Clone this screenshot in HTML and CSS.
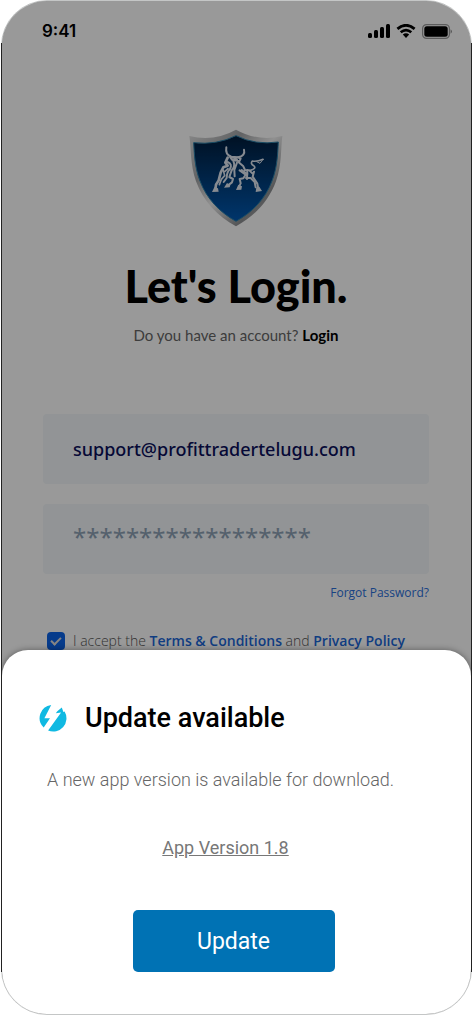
FILE: index.html
```html
<!DOCTYPE html>
<html lang="en">
<head>
    <meta charset="UTF-8" />
    <meta name="viewport" content="width=device-width, initial-scale=1.0">
    <title>Let's Login</title>
    <link rel="stylesheet" href="styles.css">
</head>
<body>
    <div class="phone">
        <header class="status-bar">
            <span class="time">9:41</span>
            <div class="status-icons">
                <svg width="22" height="14" viewBox="0 0 22 14">
                    <rect x="0" y="9" width="4" height="5" rx="1.5"/>
                    <rect x="6" y="6" width="4" height="8" rx="1.5"/>
                    <rect x="12" y="3" width="4" height="11" rx="1.5"/>
                    <rect x="18" y="0" width="4" height="14" rx="1.5"/>
                </svg>
                <svg width="20" height="14" viewBox="0 0 20 14">
                    <path d="M1.4 4.9Q10-2.4 18.6 4.9M4.7 8.3Q10 3.9 15.3 8.3" fill="none" stroke="#000" stroke-width="2.7"/>
                    <path d="M6.8 10.4Q10 8 13.2 10.4L10 13.9Z"/>
                </svg>
                <svg width="30" height="15" viewBox="0 0 30 15">
                    <rect x="0.6" y="0.6" width="26.8" height="13.8" rx="4" fill="none" stroke="#000" stroke-opacity=".4" stroke-width="1.2"/>
                    <rect x="2.3" y="2.3" width="23.4" height="10.4" rx="2.5"/>
                    <path d="M28.6 5.2q1.2.7 1.2 2.3t-1.2 2.3z" fill-opacity=".5"/>
                </svg>
            </div>
        </header>

        <main class="login">
            <svg class="logo" viewBox="41 27 282 294">
                <defs>
                    <linearGradient id="rim" x1="0" y1="0" x2="1" y2="1">
                        <stop offset="0" stop-color="#e4e4e4"/>
                        <stop offset=".3" stop-color="#a3a5a8"/>
                        <stop offset=".5" stop-color="#f0f0f0"/>
                        <stop offset=".75" stop-color="#8d8f92"/>
                        <stop offset="1" stop-color="#d8d8d8"/>
                    </linearGradient>
                    <linearGradient id="field" x1="0" y1="0" x2="0" y2="1">
                        <stop offset="0" stop-color="#001d3c"/>
                        <stop offset=".5" stop-color="#003c78"/>
                        <stop offset="1" stop-color="#005ab4"/>
                    </linearGradient>
                </defs>
                <!-- shield -->
                <path d="M42 48Q116 66 182 29Q248 66 321 48C316 86 320 132 302 184C280 244 238 288 182 319C126 288 84 244 62 184C44 132 48 86 42 48Z" fill="url(#rim)"/>
                <path d="M55 68Q124 76 182 47Q240 76 309 66C307 102 306 142 290 183C270 236 232 276 182 304C132 276 94 236 74 183C58 142 57 102 55 68Z" fill="url(#field)" stroke="#2b7fa8" stroke-width="3"/>
                <!-- bull -->
                <g fill="none" stroke="#e1e8f2" stroke-linecap="round" stroke-linejoin="round">
                    <path d="M153 82Q149 104 168 110L188 112Q211 107 206 89" stroke-width="6"/>
                    <path d="M163 109L170 119L192 124L196 116L188 112M170 111L185 118" stroke-width="6"/>
                    <path d="M157 113L150 128L157 137L144 142L136 158L130 181L122 194L120 209" stroke-width="8"/>
                    <path d="M157 126Q172 132 164 147Q154 156 154 174L145 186M174 123Q181 138 169 151L162 171L173 177L170 187L157 197M185 128L177 150L178 169" stroke-width="6"/>
                    <path d="M144 151L148 167L138 178L132 194M158 146L149 154" stroke-width="5"/>
                    <path d="M190 127L204 139L209 150L222 151L231 160M199 150L216 162M236 155L232 170L240 182L246 191L249 207" stroke-width="6"/>
                    <path d="M193 151L211 164L204 175L193 177L196 190L190 202M212 174L226 174L238 186L241 202M216 150L215 177" stroke-width="6"/>
                    <path d="M263 118Q244 126 231 123Q224 131 235 137Q245 145 225 151" stroke-width="5"/>
                    <path d="M244 125L254 130L263 118" stroke-width="3"/>
                </g>
                <path d="M117 202L128 205L130 215L110 216ZM155 189L165 196L163 202L146 203ZM189 194L200 199L198 209L182 210ZM243 202L252 200L260 213L241 216Z" fill="#e1e8f2"/>
            </svg>

            <h1>Let's Login.</h1>
            <p class="subtitle">Do you have an account? <a href="#">Login</a></p>

            <form class="login-form">
                <input type="email" class="field" aria-label="Email" value="support@profittradertelugu.com">
                <input type="password" class="field" aria-label="Password" placeholder="******************">
                <a href="#" class="forgot">Forgot Password?</a>
                <div class="accept">
                    <input type="checkbox" id="accept" checked>
                    <label for="accept">I accept the <a href="#">Terms &amp; Conditions</a> and <a href="#">Privacy Policy</a></label>
                </div>
            </form>
        </main>

        <!-- update prompt over the login screen -->
        <div class="backdrop">
            <section class="sheet" role="dialog" aria-labelledby="sheetTitle">
                <div class="sheet-header">
                    <svg width="28" height="28" viewBox="0 0 28 28">
                        <path d="M12.2.9A13.2 13.2 0 0 0 4.7 23.5L11 14.2H5.4Z" fill="#10b9e2"/>
                        <path d="M18.3 7.2L22.8 3.4L24.4 8.1L25.6 7.6A13.2 13.2 0 0 1 9.1 26.5L22.1 8.6L16.8 9.2Z" fill="#10b9e2"/>
                    </svg>
                    <h2 id="sheetTitle">Update available</h2>
                </div>
                <div class="sheet-body">
                    <p>A new app version is available for download.</p>
                    <a href="#" class="version">App Version 1.8</a>
                </div>
                <button type="button" class="update-button">Update</button>
            </section>
        </div>
    </div>
</body>
</html>
```
FILE: styles.css
```css
* {
    box-sizing: border-box;
}

body {
    margin: 0;
    padding: 0 1px;
    background: #fff;
    font-family: "Open Sans", sans-serif;
}

h1, h2, p {
    margin: 0;
    font-weight: normal;
}

a {
    text-decoration: none;
}

/* Phone frame */
.phone {
    position: relative;
    min-height: 100vh;
    border: 1px solid #c4c6c6;
    border-radius: 46px;
    background: #fff;
}

/* dark straight edges */
.phone::after {
    content: "";
    position: absolute;
    inset: 42px -1px;
    border: solid #222;
    border-width: 0 1px;
    pointer-events: none;
}

/* Status bar */
.status-bar {
    display: flex;
    justify-content: space-between;
    align-items: center;
    padding: 20px 19px 0 40px;
    height: 40px;
}

.time {
    font-family: Inter, sans-serif;
    font-size: 17px;
    line-height: 20px;
    font-weight: 600;
}

.status-icons {
    display: flex;
    align-items: center;
    gap: 6px;
    height: 16px;
}

/* Login screen */
.login {
    display: flex;
    flex-direction: column;
    align-items: center;
    padding: 88px 42px 0 41px;
}

.logo {
    width: 94px;
    height: 98px;
}

h1 {
    margin-top: 33px;
    font-family: Lato, sans-serif;
    font-size: 45px;
    line-height: 52px;
    font-weight: 900;
}

.subtitle {
    margin-top: 13px;
    font-family: Lato, sans-serif;
    font-size: 15px;
    line-height: 20px;
    color: #666;
}

.subtitle a {
    color: #000;
    font-weight: 700;
}

.login-form {
    display: flex;
    flex-direction: column;
    gap: 20px;
    width: 100%;
    margin-top: 69px;
}

.field {
    width: 100%;
    height: 70px;
    padding: 0 30px;
    border: none;
    border-radius: 4px;
    background: #f4f7fa;
    font-family: "Noto Sans", sans-serif;
    font-size: 18px;
    font-weight: 500;
    color: #0a0f5a;
}

.field::placeholder {
    font-size: 24px;
    font-weight: 400;
    color: #8da1b5;
    opacity: 1;
}

.forgot {
    align-self: flex-end;
    margin-top: -10px;
    font-size: 12px;
    line-height: 18px;
    color: #2a6fdb;
}

.accept {
    display: flex;
    align-items: center;
    gap: 8px;
    margin-top: 8px;
    padding-left: 4px;
    font-size: 14px;
    line-height: 22px;
    color: #555;
    white-space: nowrap;
}

.accept label {
    font-weight: 300;
}

.accept a {
    color: #1a66d8;
    font-weight: 600;
}

.accept input {
    appearance: none;
    width: 18px;
    height: 18px;
    margin: 0;
    border-radius: 4px;
    background: #0b63e8;
    display: flex;
    align-items: center;
    justify-content: center;
}

.accept input:checked::before {
    content: "";
    width: 8px;
    height: 4px;
    margin-bottom: 3px;
    border: solid #ddd;
    border-width: 0 0 2px 2px;
    transform: rotate(-45deg);
}

/* Update sheet */
.backdrop {
    position: absolute;
    inset: 0;
    display: flex;
    align-items: flex-end;
    border-radius: 45px;
    background: rgba(0, 0, 0, 0.4);
    overflow: hidden;
}

.sheet {
    display: flex;
    flex-direction: column;
    width: 100%;
    padding: 48px 43px 42px 37px;
    border-radius: 26px 26px 0 0;
    background: #fff;
    box-shadow: 0 0 6px rgba(0, 0, 0, 0.4);
    font-family: Roboto, sans-serif;
}

.sheet-header {
    display: flex;
    align-items: center;
    gap: 18px;
}

.sheet-header h2 {
    font-size: 27px;
    line-height: 40px;
    font-weight: 500;
    color: #000;
}

.sheet-body {
    display: flex;
    flex-direction: column;
    align-items: center;
    gap: 44px;
    padding: 30px 16px 50px 0;
    font-size: 18px;
    line-height: 24px;
    color: #666;
    white-space: nowrap;
}

.sheet-body p {
    align-self: flex-start;
    padding-left: 8px;
    font-weight: 300;
}

.version {
    color: #777;
    text-decoration: underline;
}

.update-button {
    align-self: center;
    width: 202px;
    height: 62px;
    border: none;
    border-radius: 5px;
    background: #0072b4;
    color: #fff;
    font-family: Roboto, sans-serif;
    font-size: 23px;
    cursor: pointer;
}
```
